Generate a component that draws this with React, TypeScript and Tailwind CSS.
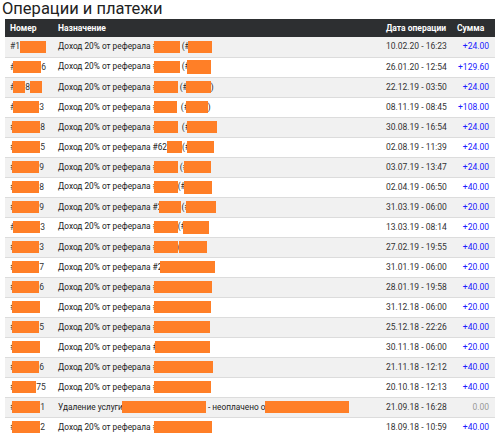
import React from "react";

type Seg = string | { w: number; ml?: number; h?: number };

type Row = {
  num: Seg[];
  desc: Seg[];
  date: string;
  sum: string;
};

const D = "Доход 20% от реферала #";

const rows: Row[] = [
  { num: ["#1", { w: 26 }], desc: [D, { w: 26, ml: -4 }, " (#", { w: 24, ml: -2 }], date: "10.02.20 - 16:23", sum: "+24.00" },
  { num: ["#", { w: 28, ml: -2 }, "6"], desc: [D, { w: 26, ml: -4 }, " (#", { w: 24, ml: -3, h: 14 }], date: "26.01.20 - 12:54", sum: "+129.60" },
  { num: ["#", { w: 12, ml: -2 }, "8", { w: 12, ml: 0 }], desc: [D, { w: 24, ml: -4 }, " (#", { w: 25, ml: -2 }, ")"], date: "22.12.19 - 03:50", sum: "+24.00" },
  { num: ["#", { w: 26, ml: -2 }, "3"], desc: [D, { w: 23, ml: -4 }, "  (#", { w: 22, ml: -3 }, ")"], date: "08.11.19 - 08:45", sum: "+108.00" },
  { num: ["#", { w: 28, ml: -3 }, "8"], desc: [D, { w: 24, ml: -4 }, "  (#", { w: 30, ml: -3 }], date: "30.08.19 - 16:54", sum: "+24.00" },
  { num: ["#", { w: 28, ml: -3 }, "5"], desc: [D + "62", { w: 15 }, "(#", { w: 27, ml: -3 }], date: "02.08.19 - 11:39", sum: "+24.00" },
  { num: ["#", { w: 27, ml: -3 }, "9"], desc: [D, { w: 24, ml: -4 }, " (#", { w: 27, ml: -4 }], date: "03.07.19 - 13:47", sum: "+24.00" },
  { num: ["#", { w: 27, ml: -3 }, "8"], desc: [D, { w: 24, ml: -4 }, "(#", { w: 28, ml: -2, h: 13 }], date: "02.04.19 - 06:50", sum: "+40.00" },
  { num: ["#", { w: 27, ml: -3 }, "9"], desc: [D + "2", { w: 22, ml: -3 }, "(#", { w: 30, ml: -3 }], date: "31.03.19 - 06:00", sum: "+20.00" },
  { num: ["#", { w: 27, ml: -2 }, "3"], desc: [D, { w: 24, ml: -4 }, "(#", { w: 26, ml: -3, h: 13 }], date: "13.03.19 - 08:14", sum: "+20.00" },
  { num: ["#", { w: 27, ml: -3 }, "3"], desc: [D, { w: 24, ml: -4 }, "(", { w: 28, ml: -2 }], date: "27.02.19 - 19:55", sum: "+40.00" },
  { num: ["#", { w: 27, ml: -3 }, "7"], desc: [D + "2", { w: 55, ml: -2 }], date: "31.01.19 - 06:00", sum: "+20.00" },
  { num: ["#", { w: 27, ml: -3 }, "6"], desc: [D, { w: 58, ml: -4 }], date: "28.01.19 - 19:58", sum: "+40.00" },
  { num: ["#", { w: 28, ml: -3 }], desc: [D, { w: 57, ml: -4 }], date: "31.12.18 - 06:00", sum: "+20.00" },
  { num: ["#", { w: 27, ml: -3 }, "5"], desc: [D, { w: 56, ml: -4 }], date: "25.12.18 - 22:26", sum: "+40.00" },
  { num: ["#", { w: 28, ml: -3 }], desc: [D, { w: 55, ml: -3 }], date: "30.11.18 - 06:00", sum: "+20.00" },
  { num: ["#", { w: 27, ml: -3 }, "6"], desc: [D, { w: 59, ml: -4 }], date: "21.11.18 - 12:12", sum: "+40.00" },
  { num: ["#", { w: 24, ml: -3 }, "75"], desc: [D, { w: 57, ml: -4 }], date: "20.10.18 - 12:13", sum: "+40.00" },
  { num: ["#", { w: 28, ml: -3 }, "1"], desc: ["Удаление услуги", { w: 84, ml: -1 }, " - неоплачено о", { w: 84, ml: -1 }], date: "21.09.18 - 16:28", sum: "0.00" },
  { num: ["#", { w: 28, ml: -3 }, "2"], desc: [D, { w: 58, ml: -4 }], date: "18.09.18 - 10:59", sum: "+40.00" },
];

const Segs = ({ segs }: { segs: Seg[] }) => (
  <>
    {segs.map((s, i) =>
      typeof s === "string" ? (
        <span key={i} className="whitespace-pre">{s}</span>
      ) : (
        <span
          key={i}
          className="inline-block bg-[#ff7f27] align-middle"
          style={{ width: s.w, height: s.h ?? 12, marginLeft: s.ml ?? 0 }}
        />
      )
    )}
  </>
);

export default function App() {
  return (
    <div className="w-[500px] h-[437px] overflow-hidden bg-white font-['Roboto',sans-serif] text-[#333]">
      <h1 className="h-[19px] pl-[2px] text-[16.5px] leading-[17px] text-[#222]">Операции и платежи</h1>
      <table className="ml-[5px] w-[490px] table-fixed border-collapse text-[8.5px]">
        <colgroup>
          <col className="w-[48px]" />
          <col className="w-[328px]" />
          <col className="w-[71px]" />
          <col className="w-[43px]" />
        </colgroup>
        <thead>
          <tr className="h-[18px] bg-[#2d2f31] text-white font-bold">
            <th className="pl-[5px] text-left">Номер</th>
            <th className="pl-[5px] text-left">Назначение</th>
            <th className="pl-[5px] text-left">Дата операции</th>
            <th className="pl-[5px] text-left">Сумма</th>
          </tr>
        </thead>
        <tbody>
          {rows.map((r, i) => (
            <tr key={i} className={`h-[20px] border-b border-[#dcdcdc] ${i % 2 === 0 ? "bg-[#f1f1f1]" : "bg-white"}`}>
              <td className="pl-[5px] whitespace-nowrap overflow-hidden"><Segs segs={r.num} /></td>
              <td className="pl-[5px] whitespace-nowrap overflow-hidden text-[8.3px] text-[#222]"><Segs segs={r.desc} /></td>
              <td className="pl-[5px] whitespace-nowrap">{r.date}</td>
              <td className={`pr-[6px] text-right whitespace-nowrap ${r.sum === "0.00" ? "text-[#999]" : "text-[#1a1aff]"}`}>{r.sum}</td>
            </tr>
          ))}
        </tbody>
      </table>
    </div>
  );
}
